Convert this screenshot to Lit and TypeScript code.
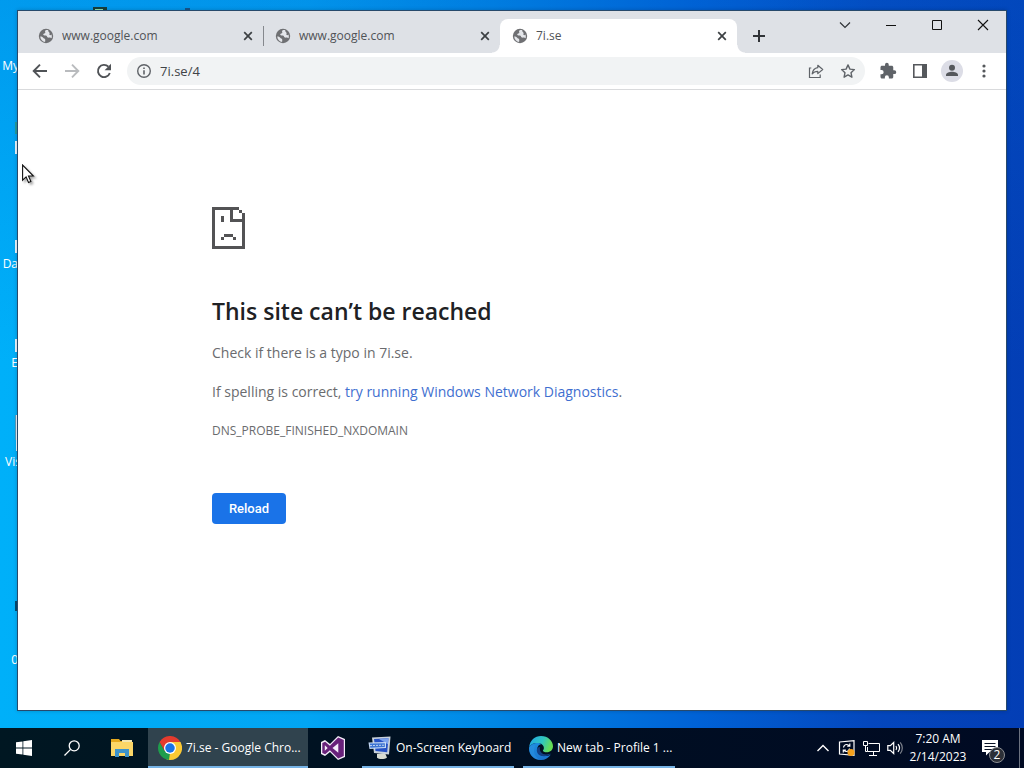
import { LitElement, html, css, svg } from "lit";
import { customElement, property } from "lit/decorators.js";

const uiFont = css`"Segoe UI", "Open Sans", "Noto Sans", sans-serif`;

const globe = svg`<svg width="16" height="16" viewBox="0 0 16 16" aria-hidden="true">
  <circle cx="8" cy="8" r="7.2" fill="#6f7073"/>
  <path d="M10.2 2.2c-1.6-.3-2.8.1-3.1.9-.3 1 .5 1.2.1 2-.4.7-1.5.4-1.9 1.2-.4.7.5 1.3 1.5 1.2 1.3-.1 2 .2 2.2 1.1.2 1.2 1.3 1.1 2.2 1 1.2-.1 1.9.3 2.4.6.3-1 .3-2.6-.1-3.7-.5.7-1.5.9-2 .3-.5-.7.3-1.2.1-1.9-.2-.8-1.3-.7-1.4-2.7z" fill="#e4e6ea"/>
  <path d="M2.2 8.5c1.2 0 2.5.4 3 1.3.5.9 1.6.7 2 1.6.3.8-.2 1.7-.1 2.500-2.500-.3-4.600-2.200-4.900-5.400z" fill="#e4e6ea"/>
</svg>`;

const cross = svg`<svg width="10" height="10" viewBox="0 0 10 10" aria-hidden="true">
  <path d="M1.2 1.2l7.6 7.6M8.8 1.2L1.2 8.8" stroke="#3c4043" stroke-width="1.7" fill="none"/></svg>`;

@customElement("browser-tab")
class BrowserTab extends LitElement {
  @property() label = "";
  @property({ type: Boolean, reflect: true }) active = false;
  @property({ type: Boolean, reflect: true }) divided = false;

  static styles = css`
    :host {
      position: relative;
      flex: 0 1 237px;
      min-width: 0;
      display: flex;
      align-items: center;
      gap: 8px;
      height: 34px;
      padding: 0 10px 0 12px;
      box-sizing: border-box;
      border-radius: 8px 8px 0 0;
    }
    :host([active]) { background: #fff; }
    :host([active])::before,
    :host([active])::after {
      content: "";
      position: absolute;
      bottom: 0;
      width: 8px;
      height: 8px;
    }
    :host([active])::before { left: -8px; background: radial-gradient(circle at 0 0, #0000 7px, #fff 8px); }
    :host([active])::after { right: -8px; background: radial-gradient(circle at 100% 0, #0000 7px, #fff 8px); }
    :host([divided])::after {
      content: "";
      position: absolute;
      right: -1px;
      top: 7px;
      width: 1px;
      height: 20px;
      background: #85888d;
    }
    .title {
      flex: 1;
      overflow: hidden;
      white-space: nowrap;
      color: #505357;
      font: 12px/16px ${uiFont};
    }
    .close { display: flex; padding: 0; border: 0; background: none; }
  `;

  render() {
    return html`${globe}<span class="title">${this.label}</span>
      <button class="close" aria-label="Close tab">${cross}</button>`;
  }
}

@customElement("network-error")
class NetworkError extends LitElement {
  static styles = css`
    :host { display: block; flex: 1; background: #fff; font-family: ${uiFont}; color: #6a6b6e; }
    main { max-width: 600px; margin: 0 auto; padding-top: 117px; }
    svg { display: block; }
    h1 { margin: 46px 0 0; font-size: 23px; font-weight: 600; line-height: 32px; color: #202124; }
    p { margin: 14px 0 0; font-size: 14px; line-height: 25px; }
    h1 + p { margin-top: 13px; }
    a { color: #3f6fd0; text-decoration: none; }
    .code { font-size: 12px; }
    button {
      margin-top: 50px;
      min-width: 74px;
      height: 31px;
      padding: 0 16px;
      border: 0;
      border-radius: 4px;
      background: #1a73e8;
      color: #fff;
      font: 500 13px/16px Roboto, sans-serif;
    }
  `;

  render() {
    return html`<main>
      <svg width="33" height="42" viewBox="0 0 11 14" shape-rendering="crispEdges" role="img" aria-label="Page unavailable">
        <path fill="#535355" d="M0 0h9v1H7v3h3V2h1v12H0zM1 1v12h9V5H6V1zM9 1h1v1H9zM3 3h1v2H3zM4 9h3v1H4zM3 10h1v1H3zM7 10h1v1H7z" fill-rule="evenodd"/>
      </svg>
      <h1>This site can’t be reached</h1>
      <p>Check if there is a typo in 7i.se.</p>
      <p>If spelling is correct, <a href="#">try running Windows Network Diagnostics</a>.</p>
      <p class="code">DNS_PROBE_FINISHED_NXDOMAIN</p>
      <button>Reload</button>
    </main>`;
  }
}

@customElement("browser-window")
class BrowserWindow extends LitElement {
  static styles = css`
    :host { display: flex; flex-direction: column; border: 1px solid #27496b; background: #fff; }
    .strip { display: flex; height: 42px; background: #dee1e6; }
    .tabs { flex: 1; display: flex; align-items: flex-end; min-width: 0; padding-left: 8px; }
    .add { width: 44px; height: 34px; }
    .controls { display: flex; }
    .controls button { width: 46px; height: 28px; }
    button { display: flex; align-items: center; justify-content: center; padding: 0; border: 0; background: none; }
    .bar { display: flex; align-items: center; height: 36px; padding: 0 6px; border-bottom: 1px solid #d9dadc; }
    .bar button { flex: none; width: 32px; height: 32px; }
    .omni {
      flex: 1;
      display: flex;
      align-items: center;
      min-width: 0;
      height: 28px;
      margin: 0 7px;
      padding: 0 1px;
      border-radius: 14px;
      background: #f1f3f4;
    }
    .address { flex: 1; min-width: 0; display: flex; }
    .address input {
      width: 100%;
      padding: 0;
      border: 0;
      outline: 0;
      background: none;
      color: #404347;
      font: 13px/20px ${uiFont};
    }
  `;

  render() {
    return html`
      <div class="strip">
        <div class="tabs">
          <browser-tab label="www.google.com" divided></browser-tab>
          <browser-tab label="www.google.com"></browser-tab>
          <browser-tab label="7i.se" active></browser-tab>
          <button class="add" aria-label="New tab">
            <svg width="12" height="12" viewBox="0 0 12 12"><path d="M6 0v12M0 6h12" stroke="#303337" stroke-width="2"/></svg>
          </button>
        </div>
        <div class="controls">
          <button aria-label="Search tabs"><svg width="12" height="8" viewBox="0 0 12 8"><path d="M1 1.5l5 5 5-5" fill="none" stroke="#303337" stroke-width="1.2"/></svg></button>
          <button aria-label="Minimize"><svg width="10" height="10"><path d="M0 5.5h10" stroke="#111"/></svg></button>
          <button aria-label="Maximize"><svg width="10" height="10"><path d="M.5.5h9v9h-9z" fill="none" stroke="#111"/></svg></button>
          <button aria-label="Close"><svg width="12" height="12" viewBox="0 0 12 12"><path d="M1 1l10 10M11 1L1 11" stroke="#111" stroke-width="1.1"/></svg></button>
        </div>
      </div>
      <div class="bar">
        <button aria-label="Back"><svg width="16" height="16" viewBox="0 0 16 16"><path d="M15 8H2M8 1.7L1.7 8 8 14.3" fill="none" stroke="#505357" stroke-width="1.9"/></svg></button>
        <button aria-label="Forward" disabled><svg width="16" height="16" viewBox="0 0 16 16"><path d="M1 8h13M8 1.7L14.3 8 8 14.3" fill="none" stroke="#b9bbbe" stroke-width="1.9"/></svg></button>
        <button aria-label="Reload"><svg width="16" height="16" viewBox="0 0 16 16"><path d="M13.8 10A6.1 6.1 0 1 1 12.4 3.7" fill="none" stroke="#505357" stroke-width="1.9"/><path d="M15 .8v6.4H8.6z" fill="#505357"/></svg></button>
        <div class="omni">
          <button aria-label="View site information"><svg width="16" height="16" viewBox="0 0 16 16"><circle cx="8" cy="8" r="6.3" fill="none" stroke="#5f6368" stroke-width="1.4"/><path d="M7.2 7.2h1.6v4.3H7.2zM7.2 4.4h1.6V6H7.2z" fill="#5f6368"/></svg></button>
          <label class="address"><input aria-label="Address" value="7i.se/4"></label>
          <button aria-label="Share"><svg width="16" height="16" viewBox="0 0 16 16"><path d="M3.3 5H1.5v9.5h10.7v-3" fill="none" stroke="#5f6368" stroke-width="1.2"/><path d="M9.8 2.3L14.7 6.5 9.8 10.6V8.3C7.3 8.3 5.6 9 4.2 10.9 4.7 7.4 6.6 5.2 9.8 4.7z" fill="none" stroke="#5f6368" stroke-width="1.2" stroke-linejoin="round"/></svg></button>
          <button aria-label="Bookmark this tab"><svg width="16" height="16" viewBox="0 0 16 16"><path d="M8 1.9l1.9 4.2 4.5.5-3.4 3.1.9 4.5L8 11.9l-3.9 2.3.9-4.5-3.4-3.1 4.5-.5z" fill="none" stroke="#5f6368" stroke-width="1.4" stroke-linejoin="round"/></svg></button>
        </div>
        <button aria-label="Extensions"><svg width="18" height="18" viewBox="0 0 24 24"><path fill="#5f6368" d="M20.5 11H19V7c0-1.1-.9-2-2-2h-4V3.5a2.5 2.5 0 0 0-5 0V5H4c-1.1 0-2 .9-2 2v3.8h1.5a2.7 2.7 0 0 1 0 5.4H2V20c0 1.1.9 2 2 2h3.8v-1.5a2.7 2.7 0 0 1 5.4 0V22H17c1.1 0 2-.9 2-2v-4h1.5a2.5 2.5 0 0 0 0-5z"/></svg></button>
        <button aria-label="Side panel"><svg width="14" height="14" viewBox="0 0 14 14"><path d="M.8.8h12.4v12.4H.8z" fill="none" stroke="#55585c" stroke-width="1.6"/><path d="M9 0h5v14H9z" fill="#55585c"/></svg></button>
        <button aria-label="Profile"><svg width="22" height="22" viewBox="0 0 22 22"><circle cx="11" cy="11" r="11" fill="#dcdde6"/><circle cx="11" cy="7.7" r="3" fill="#55585c"/><path d="M5 16v-1.2c0-2 3.5-3.1 6-3.1s6 1.1 6 3.1V16z" fill="#55585c"/></svg></button>
        <button aria-label="Menu"><svg width="4" height="14" viewBox="0 0 4 14" fill="#55585c"><circle cx="2" cy="2" r="1.6"/><circle cx="2" cy="7" r="1.6"/><circle cx="2" cy="12" r="1.6"/></svg></button>
      </div>
      <network-error></network-error>`;
  }
}

const chrome = svg`<svg width="24" height="24" viewBox="0 0 48 48" aria-hidden="true">
  <path d="M24 24l20.8-12A24 24 0 0 1 24 48z" fill="#fcc934"/>
  <path d="M24 12h20.8a24 24 0 0 1 0 12L34.4 30z" fill="#fcc934"/>
  <path d="M34.4 30L24 48a24 24 0 0 1-8-2L24 34z" fill="#fcc934"/>
  <path d="M3.2 12L13.6 30 24 34l-2 13.9A24 24 0 0 1 3.2 12z" fill="#1f9d4d"/>
  <path d="M3.2 12a24 24 0 0 1 41.6 0H24L13.6 30z" fill="#e33b2e"/>
  <circle cx="24" cy="24" r="12" fill="#fff"/><circle cx="24" cy="24" r="9.5" fill="#1a73e8"/>
</svg>`;

const keyboard = svg`<svg width="24" height="24" viewBox="0 0 24 24" aria-hidden="true">
  <path d="M9 18l8-1 2 4.5c-2 2-8 2.2-10 .3z" fill="#d9dcd2"/>
  <path d="M4 1.5L22.5.5 21 18.5 6 17z" fill="#c9d2dc"/>
  <path d="M6 3l14.5-.8-1.3 14L7.5 15z" fill="#2450c4"/>
  <path d="M11 3l9.5-.8-.6 6z" fill="#7ea4ee"/>
  <path d="M.5 6.5L18 6v6L1.5 13z" fill="#c5d8f3"/>
  <path d="M1.8 7.6l15-.4v3.8l-14.5.7z" fill="#3d74d2"/>
  <path d="M2 9.6l14.8-.4" stroke="#dfe9f7" stroke-width=".8" stroke-dasharray="2 1"/>
</svg>`;

const edge = svg`<svg width="24" height="24" viewBox="0 0 24 24" aria-hidden="true">
  <defs>
    <linearGradient id="e1" x1="0" y1="0" x2="1" y2="0.3"><stop offset="0" stop-color="#1fa5e8"/><stop offset=".6" stop-color="#30c6c0"/><stop offset="1" stop-color="#66dc55"/></linearGradient>
    <linearGradient id="e2" x1="0" y1="0" x2="0.5" y2="1"><stop offset="0" stop-color="#1c8fe0"/><stop offset="1" stop-color="#1a74cf"/></linearGradient>
  </defs>
  <path d="M.2 11C.8 4.6 5.8 0 12 0c7 0 12 5 12 10.3 0 3.7-2.8 6-6.2 6-2.4 0-3.9-.8-3.9-1.6 0-.6 1-1 1-2.8 0-2.7-2.7-5-6.4-5C4.5 6.9 1.4 8.5.2 11z" fill="url(#e1)"/>
  <path d="M.1 11.5C1 8.6 4.5 6.9 8.5 6.9c1.6 0 3 .4 4 1.1-2.8.4-4.3 2.7-4.3 5.2 0 4 3.4 6.800 7.600 6.800 2.300 0 4.300-.7 6-1.600C19.700 21.800 16.200 24 12 24 5 24-.6 18.500.1 11.500z" fill="url(#e2)"/>
  <path d="M6.500 9.500C3.800 13 4.500 21.800 12 24 5 24 0 18.500.1 12c.8-2 3.500-3.200 6.400-2.500z" fill="#2b8fdf" opacity=".6"/>
  <path d="M11 11c-1 4 2 7.500 6 7.500 2 0 4-.8 5-1-2 2-5 2.800-7 2.700-4.500 0-7.500-2.800-7.200-6.500.2-1.500 1.400-2.700 3.200-2.700z" fill="#123e83"/>
</svg>`;

@customElement("task-bar")
class TaskBar extends LitElement {
  static styles = css`
    :host {
      display: flex;
      height: 40px;
      background: linear-gradient(90deg, #001722, #000f22 50%, #000a23);
      color: #fff;
      font: 12px/18px ${uiFont};
    }
    button {
      flex: none;
      display: flex;
      align-items: center;
      justify-content: center;
      padding: 0;
      border: 0;
      background: none;
      color: inherit;
      font: inherit;
    }
    .pin { width: 48px; }
    .wide { width: 50px; }
    .explorer { width: 52px; }
    .task {
      flex: 0 1 152px;
      min-width: 0;
      justify-content: flex-start;
      gap: 4px;
      padding: 2px 0 0 6px;
      box-sizing: border-box;
      border-bottom: 2px solid #76b3e6;
      white-space: nowrap;
      overflow: hidden;
    }
    .task.current { flex-basis: 160px; padding-left: 10px; background: #30434e; }
    .task svg { flex: none; }
    .keyboard { margin-left: 4px; }
    .edge { margin-left: 9px; }
    .tray { margin-left: auto; display: flex; }
    .tray button { width: 24px; }
    .tray .clock { width: 62px; flex-direction: column; }
    .tray .notes { position: relative; width: 50px; box-sizing: border-box; padding-right: 8px; }
    .badge {
      position: absolute;
      left: 20px;
      top: 19px;
      width: 16px;
      height: 16px;
      box-sizing: border-box;
      border: 1px solid #8b8e93;
      border-radius: 50%;
      background: #2b2f37;
      line-height: 14px;
    }
    .peek { width: 4px; border-left: 1px solid #6b7280; }
  `;

  render() {
    return html`
      <button class="pin" aria-label="Start"><svg width="16" height="16" viewBox="0 0 16 16"><path fill="#fff" d="M0 2.3l6.5-.9v6.2H0zM7.3 1.3L16 0v7.6H7.3zM0 8.4h6.5v6.2L0 13.7zM7.3 8.4H16V16l-8.7-1.3z"/></svg></button>
      <button class="pin" aria-label="Search"><svg width="16" height="16" viewBox="0 0 16 16" fill="none" stroke="#fff" stroke-width="1.3"><circle cx="10.2" cy="5.8" r="5"/><path d="M6.6 9.4L.5 15.5"/></svg></button>
      <button class="explorer" aria-label="File Explorer"><svg width="22" height="18" viewBox="0 0 22 18"><path d="M0 0h8l1.500 2H21v4H0z" fill="#e5a91e"/><path d="M0 3h22v14H0z" fill="#fbd667"/><path d="M11 1h10v2H11z" fill="#f3e6b0"/><path d="M4 10h14v8h-4v-4H8v4H4z" fill="#3d93cb"/></svg></button>
      <button class="task current">${chrome}<span>7i.se - Google Chro...</span></button>
      <button class="wide" aria-label="Visual Studio"><svg width="24" height="24" viewBox="0 0 24 24"><path d="M17 0l7 3v18l-7 3-8-8-5 4-4-2V6l4-2 5 4z" fill="#f5effa"/><path d="M17.2 1.500L22.800 4v16l-5.600 2.500-8.300-8.200-4.700 4L1.300 17V7l2.900-1.300 4.700 4zM17.300 7.200L11.500 12l5.800 4.800zM3.800 9.200v5.600L6.700 12z" fill="#68217a" fill-rule="evenodd"/></svg></button>
      <button class="task keyboard">${keyboard}<span>On-Screen Keyboard</span></button>
      <button class="task edge">${edge}<span>New tab - Profile 1 ...</span></button>
      <div class="tray">
        <button aria-label="Show hidden icons"><svg width="12" height="8" viewBox="0 0 12 8"><path d="M.5 7L6 1.5 11.5 7" fill="none" stroke="#fff" stroke-width="1.4"/></svg></button>
        <button aria-label="Windows Update"><svg width="18" height="16" viewBox="0 0 18 16" fill="none" stroke="#fff" stroke-width="1.2"><path d="M1.5 2L16 .7v14.600L1.500 14z"/><path d="M5.500 7.500c.3-2 1.700-3 3.300-3 1.200 0 2 .5 2.700 1.300M11.800 3.500v2.600H9.200M11.500 8.500c-.3 2-1.500 3-3 3-1.200 0-2-.5-2.700-1.300M5.300 12.500V10h2.600"/><circle cx="13" cy="12.500" r="3.500" fill="#f5a11c" stroke="none"/></svg></button>
        <button aria-label="Network"><svg width="17" height="15" viewBox="0 0 17 15" fill="none" stroke="#fff"><path d="M5.500 2.500h11v8h-12V6M10.500 11v3M6 14.500h8"/><path d="M.5.5h4v4h-4zM2.500 4.500v6h2"/></svg></button>
        <button aria-label="Volume"><svg width="17" height="14" viewBox="0 0 17 14" fill="none" stroke="#fff" stroke-width="1.2"><path d="M.8 4.700h2.500L6.700 1.500v11L3.300 9.300H.8z"/><path d="M9 5c.8 1.200.8 2.800 0 4M11 3.200c1.800 2.200 1.800 5.400 0 7.600"/><path d="M13.200 1.300c2.800 3.300 2.800 8.100 0 11.400" stroke="#7d828c"/></svg></button>
        <button class="clock"><span>7:20 AM</span><span>2/14/2023</span></button>
        <button class="notes" aria-label="2 notifications"><svg width="16" height="16" viewBox="0 0 16 16"><path d="M0 0h16v12H7.500L4 15.500V12H0z" fill="#fff"/><path d="M2.500 3.500h11M2.500 6.500h11M2.500 9.500h8" stroke="#0a1428"/></svg><span class="badge">2</span></button>
        <span class="peek"></span>
      </div>`;
  }
}

interface Shortcut { y: number; right: number; label: string; }
const shortcuts: Shortcut[] = [
  { y: 57, right: 19, label: "My" },
  { y: 255, right: 18, label: "Da" },
  { y: 354, right: 18, label: "E" },
  { y: 453, right: 21, label: "Vis" },
  { y: 651, right: 18, label: "0" },
];
const slivers = [
  { x: 93, y: 7, w: 14, h: 4, c: "#173f3c" },
  { x: 95, y: 9, w: 8, h: 2, c: "#8be0b4" },
  { x: 185, y: 8, w: 5, h: 3, c: "#17568c" },
  { x: 15, y: 122, w: 3, h: 12, c: "#269b9b" },
  { x: 15, y: 141, w: 3, h: 13, c: "#eaf5fc" },
  { x: 15, y: 240, w: 3, h: 13, c: "#eaf5fc" },
  { x: 15, y: 339, w: 3, h: 13, c: "#eaf5fc" },
  { x: 15, y: 415, w: 1, h: 25, c: "#5d9bb8" },
  { x: 16, y: 415, w: 2, h: 36, c: "#eaf5fc" },
  { x: 15, y: 601, w: 3, h: 10, c: "#06496f" },
];

@customElement("app-root")
class AppRoot extends LitElement {
  static styles = css`
    :host { display: flex; flex-direction: column; height: 100vh; overflow: hidden; }
    .desktop {
      position: relative;
      flex: 1;
      min-height: 0;
      display: flex;
      padding: 10px 17px 17px;
      background:
        linear-gradient(180deg, #0060d044, #0060d000 50%),
        linear-gradient(90deg, #00b0f9 0, #02a5f3 30%, #0087e6 48%, #0062d6 68%, #0447bd 85%, #033eb5 100%);
    }
    browser-window { flex: 1; min-width: 0; position: relative; box-shadow: 0 0 4px #0003; }
    .shortcut {
      position: absolute;
      left: 0;
      display: flex;
      justify-content: flex-end;
      color: #fff;
      font: 12px/18px ${uiFont};
      white-space: nowrap;
    }
    .sliver { position: absolute; }
    .cursor { position: absolute; left: 22px; top: 164px; filter: drop-shadow(2px 2px 1px #0005); }
  `;

  render() {
    return html`
      <div class="desktop">
        ${slivers.map((s) => html`<i class="sliver" style="left:${s.x}px;top:${s.y}px;width:${s.w}px;height:${s.h}px;background:${s.c}"></i>`)}
        ${shortcuts.map((s) => html`<span class="shortcut" style="top:${s.y}px;width:${s.right}px">${s.label}</span>`)}
        <browser-window></browser-window>
        <svg class="cursor" width="13" height="20" viewBox="0 0 13 20" aria-hidden="true"><path d="M.6 1v15.200l3.500-3.300 2.400 5.600 2.400-1-2.400-5.500h4.900z" fill="#fff" stroke="#111" stroke-width="1.1"/></svg>
      </div>
      <task-bar></task-bar>`;
  }
}
